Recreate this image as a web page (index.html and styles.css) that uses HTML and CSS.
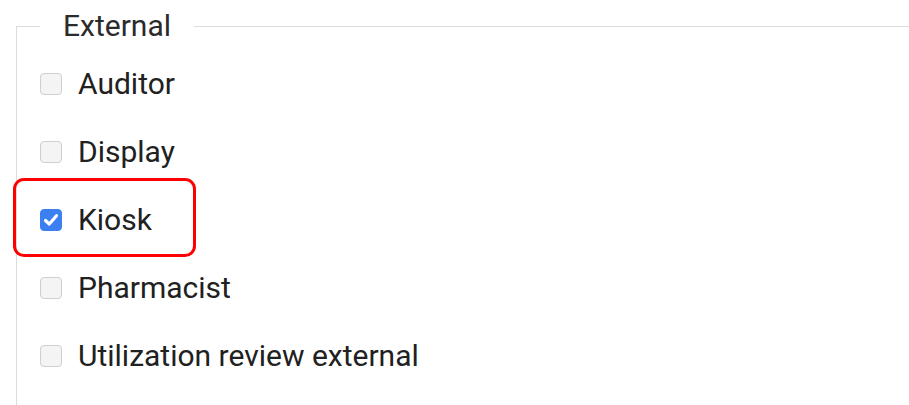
FILE: index.html
```html
<!DOCTYPE html>
<html>
<head>
<meta charset="utf-8">
<link rel="stylesheet" href="styles.css">
</head>
<body>
<fieldset class="group">
  <legend class="group-title">External</legend>
  <label class="row"><span class="box"></span><span class="label">Auditor</span></label>
  <label class="row"><span class="box"></span><span class="label">Display</span></label>
  <label class="row highlighted"><span class="box checked"><svg viewBox="0 0 20 20" width="20" height="20"><path d="M4.5 10.5 L8.3 14 L15.5 5.8" fill="none" stroke="#fff" stroke-width="3.2" stroke-linecap="round" stroke-linejoin="round"/></svg></span><span class="label">Kiosk</span><span class="mark"></span></label>
  <label class="row"><span class="box"></span><span class="label">Pharmacist</span></label>
  <label class="row"><span class="box"></span><span class="label">Utilization review external</span></label>
</fieldset>
</body>
</html>
```
FILE: styles.css
```css
html, body {
  margin: 0;
  padding: 0;
  background: #fff;
}
body {
  font-family: Roboto, "Liberation Sans", sans-serif;
  color: #212121;
  overflow: hidden;
  height: 405px;
}
.group {
  margin: 10px -20px 0 16px;
  border: 1px solid #dcdcdc;
  padding: 8px 0 0 23px;
  height: 500px;
}
.group-title {
  font-size: 30px;
  line-height: 32px;
  padding: 0 23px;
  color: #2b2b2b;
}
.row {
  display: flex;
  align-items: center;
  height: 68px;
  gap: 16px;
  position: relative;
}
.box {
  width: 20px;
  height: 20px;
  border: 1px solid #cfcfcf;
  border-radius: 4px;
  background: #f4f4f4;
  display: flex;
  align-items: center;
  justify-content: center;
  flex: none;
}
.box.checked {
  background: #3b7ff0;
  border-color: #3b7ff0;
}
.label {
  font-size: 30px;
  line-height: 32px;
}
.mark {
  position: absolute;
  left: -27px;
  top: -8px;
  width: 177px;
  height: 73px;
  border: 3px solid #ff0000;
  border-radius: 11px;
  pointer-events: none;
}
```
